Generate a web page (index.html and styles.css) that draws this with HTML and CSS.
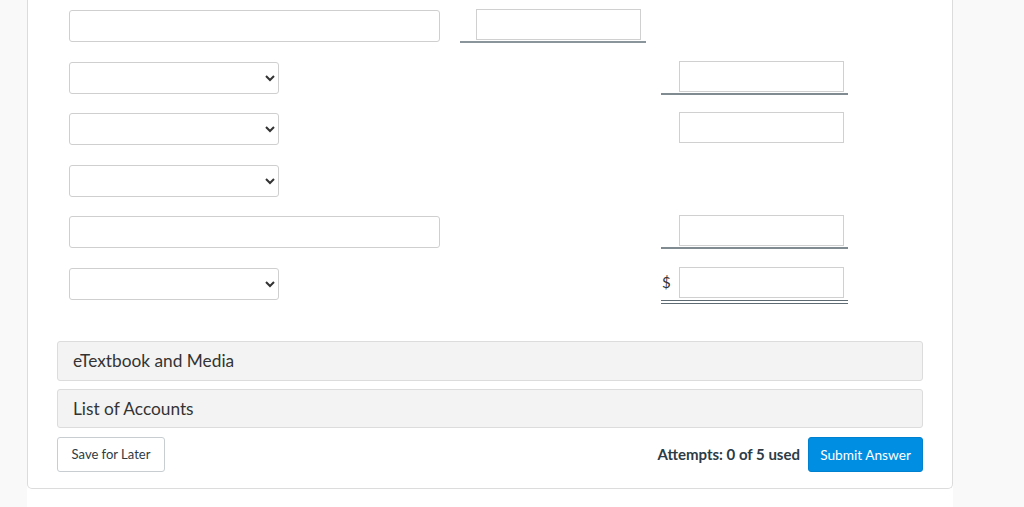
FILE: index.html
```html
<!DOCTYPE html>
<html lang="en">
<head>
<meta charset="utf-8">
<title>Question</title>
<link rel="stylesheet" href="styles.css">
</head>
<body>
<div class="page">
  <div class="gutter-left"></div>
  <div class="main">
    <div class="card">
      <div class="form-grid">
        <div class="cell"><input class="text wide" type="text"></div>
        <div class="cell"><div class="uline mid"><input class="num" type="text"></div></div>
        <div class="cell"></div>

        <div class="cell"><select class="sel"><option></option></select></div>
        <div class="cell"></div>
        <div class="cell"><div class="uline right"><input class="num" type="text"></div></div>

        <div class="cell"><select class="sel"><option></option></select></div>
        <div class="cell"></div>
        <div class="cell"><div class="plain right"><input class="num" type="text"></div></div>

        <div class="cell"><select class="sel"><option></option></select></div>
        <div class="cell"></div>
        <div class="cell"></div>

        <div class="cell"><input class="text wide" type="text"></div>
        <div class="cell"></div>
        <div class="cell"><div class="uline right"><input class="num" type="text"></div></div>

        <div class="cell"><select class="sel"><option></option></select></div>
        <div class="cell"></div>
        <div class="cell"><div class="dline right"><span class="dollar">$</span><input class="num" type="text"></div></div>
      </div>

      <div class="accordions">
        <div class="accordion">eTextbook and Media</div>
        <div class="accordion short">List of Accounts</div>
      </div>

      <div class="actions">
        <button class="btn save" type="button">Save for Later</button>
        <div class="submit-group">
          <span class="attempts">Attempts: 0 of 5 used</span>
          <button class="btn submit" type="button">Submit Answer</button>
        </div>
      </div>
    </div>
  </div>
  <div class="gutter-right"></div>
</div>
</body>
</html>
```

FILE: styles.css
```css
* { box-sizing: border-box; }

html, body {
  margin: 0;
  padding: 0;
  background: #ffffff;
  font-family: Lato, "Liberation Sans", sans-serif;
  color: #2d3b45;
}

.page {
  display: flex;
  min-height: 507px;
}

.gutter-left {
  width: 27px;
  flex: none;
  background: #f9f9f9;
}

.gutter-right {
  flex: 1;
  background: #f9f9f9;
}

.main {
  width: 926px;
  flex: none;
  background: #ffffff;
}

.card {
  border: 1px solid #dcdcdc;
  border-top: none;
  border-radius: 0 0 5px 5px;
  padding: 10px 29px 16px 29px;
  background: #ffffff;
}

.form-grid {
  display: grid;
  grid-template-columns: 391px 201px 187px;
  grid-auto-rows: 51.6px;
  padding-left: 12px;
}

.cell {
  display: flex;
  align-items: flex-start;
}

input.text, input.num, select.sel {
  font-family: Lato, "Liberation Sans", sans-serif;
  font-size: 14px;
  height: 32px;
  margin: 0;
  background: #ffffff;
  border: 1px solid #cfcfcf;
  outline: none;
}

input.wide {
  width: 371px;
  border-radius: 3px;
}

select.sel {
  width: 210px;
  border-radius: 3px;
  color: #333;
  padding: 0 6px;
}

input.num {
  width: 165px;
  border-radius: 0;
  border-color: #d0d0d0;
  height: 31px;
}

.uline, .plain, .dline {
  display: flex;
  align-items: center;
}

.uline.mid {
  width: 186px;
  padding-left: 16px;
  padding-bottom: 1px;
  border-bottom: 2px solid #8a949b;
  margin-top: -1px;
}

.uline.right, .plain.right, .dline.right {
  width: 187px;
  padding-left: 18px;
  margin-top: -1px;
}

.uline.right {
  padding-bottom: 1px;
  border-bottom: 2px solid #7f8a91;
}

.dline.right {
  position: relative;
  padding-bottom: 2px;
  border-bottom: 4px double #5f6b73;
}

.dollar {
  position: absolute;
  left: 1px;
  top: 6px;
  font-size: 15px;
  color: #333;
}

.accordions {
  display: flex;
  flex-direction: column;
  gap: 8px;
  margin-top: 21px;
}

.accordion {
  height: 40px;
  display: flex;
  align-items: center;
  padding-left: 15px;
  background: #f3f3f3;
  border: 1px solid #dcdcdc;
  border-radius: 3px;
  font-size: 17.3px;
  color: #333;
}

.accordion.short {
  height: 39px;
}

.actions {
  display: flex;
  justify-content: space-between;
  align-items: center;
  margin-top: 9px;
}

.btn {
  font-family: Lato, "Liberation Sans", sans-serif;
  font-size: 13px;
  height: 35px;
  border-radius: 3px;
  cursor: pointer;
  margin: 0;
}

.btn.save {
  width: 108px;
  background: #ffffff;
  border: 1px solid #c7cdd1;
  color: #2d3b45;
}

.submit-group {
  display: flex;
  align-items: center;
  gap: 8px;
}

.attempts {
  font-weight: bold;
  font-size: 15px;
  color: #2d3b45;
}

.btn.submit {
  width: 115px;
  font-size: 13.7px;
  background: #008ee2;
  border: 1px solid #0081cf;
  color: #ffffff;
}
```
